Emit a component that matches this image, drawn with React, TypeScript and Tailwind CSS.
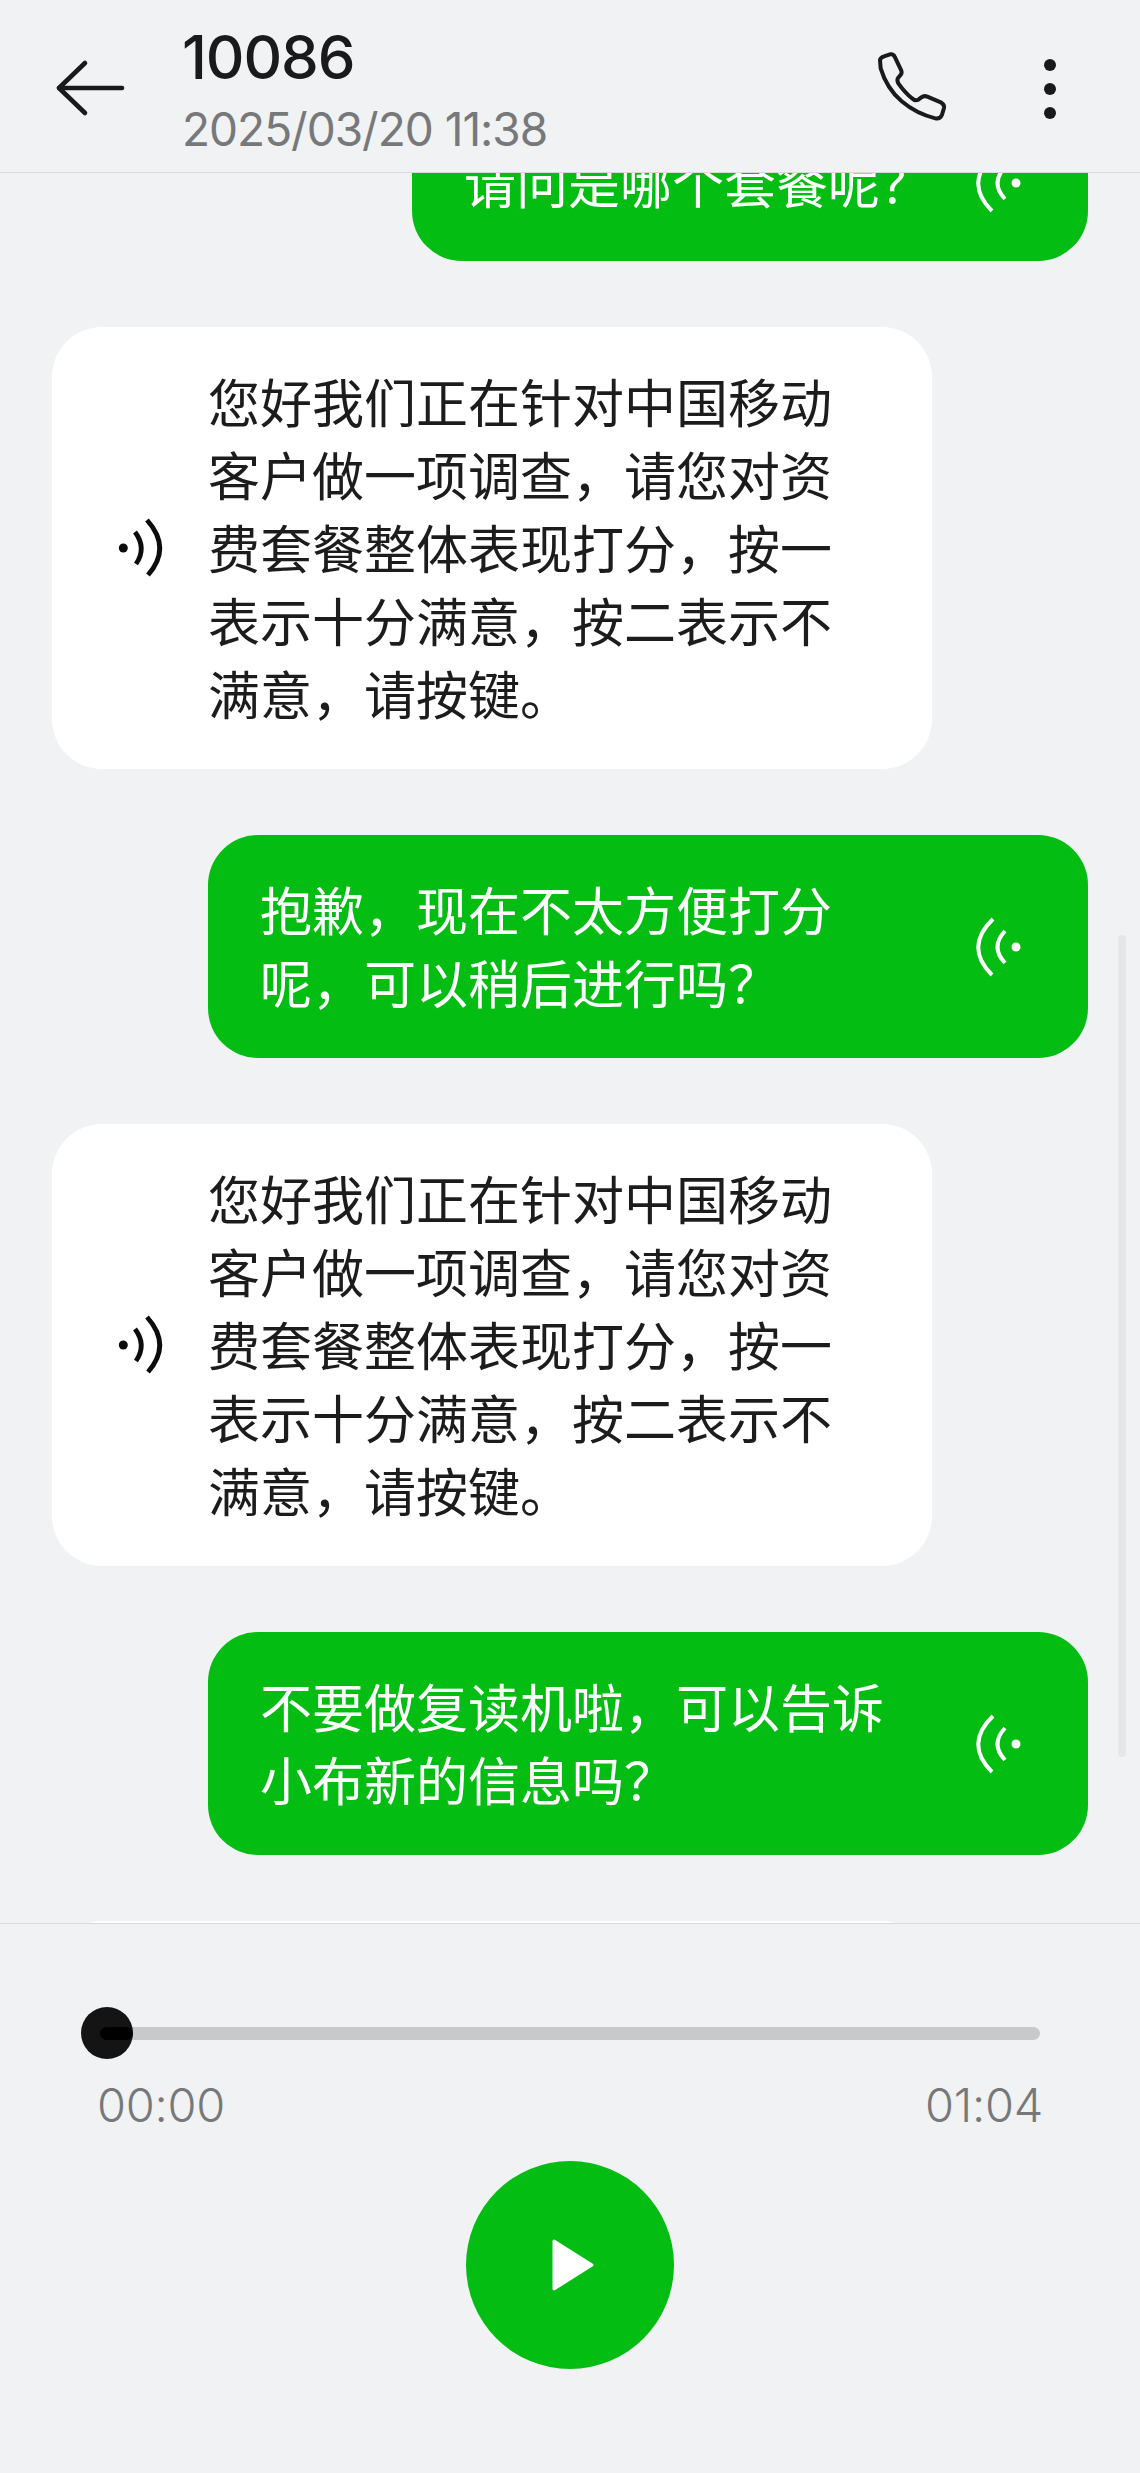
import React from 'react';

const cjk = 'font-["Noto_Sans_CJK_SC","Noto_Sans",sans-serif]';

const surveyLines = [
  '您好我们正在针对中国移动',
  '客户做一项调查，请您对资',
  '费套餐整体表现打分，按一',
  '表示十分满意，按二表示不',
  '满意，请按键。',
];

// white bubble speaker waves, opening to the right
const IncomingVoice: React.FC = () => (
  <svg viewBox="0 0 60 70" className="w-[60px] h-[70px] shrink-0 text-[#0c0c0c]" fill="none" stroke="currentColor" strokeWidth="4.8">
    <circle cx="11.3" cy="35" r="4.5" fill="currentColor" stroke="none" />
    <path d="M23 19 Q35 35 24 51" />
    <path d="M35 7 Q60 35 36 62" />
  </svg>
);

// green bubble waves, opening to the left
const OutgoingVoice: React.FC = () => (
  <svg viewBox="0 0 60 70" className="w-[60px] h-[70px] shrink-0 text-white" fill="none" stroke="currentColor" strokeWidth="4">
    <circle cx="51" cy="35" r="4.5" fill="currentColor" stroke="none" />
    <path d="M40 19 Q25 35 40 51" />
    <path d="M28 7 Q-1 35 27 63" />
  </svg>
);

const IncomingBubble: React.FC<{ lines?: string[] }> = ({ lines = [] }) => (
  <div className="ml-[52px] w-[880px] h-[442px] shrink-0 rounded-[50px] bg-white flex items-center pl-[60px] gap-[36px]">
    {lines.length > 0 && <IncomingVoice />}
    <div className="pb-[3px] text-[52px] leading-[73px] text-[#1c1c1c]">
      {lines.map((line) => (
        <div key={line} className="whitespace-nowrap">{line}</div>
      ))}
    </div>
  </div>
);

const OutgoingBubble: React.FC<{ lines: string[]; className: string }> = ({ lines, className }) => (
  <div className={`self-end mr-[52px] shrink-0 rounded-[50px] bg-[#03bd13] flex items-center justify-between pl-[52px] pr-[63px] ${className}`}>
    <div className="pb-[3px] text-[52px] leading-[73.5px] text-white">
      {lines.map((line) => (
        <div key={line} className="whitespace-nowrap">{line}</div>
      ))}
    </div>
    <OutgoingVoice />
  </div>
);

export default function App() {
  return (
    <div className={`relative w-[1140px] h-[2473px] overflow-hidden bg-[#f0f2f4] flex flex-col ${cjk}`}>
      <header className="h-[173px] shrink-0 border-b border-[#d8d9db] flex items-start">
        <svg viewBox="0 0 80 60" className="w-[80px] h-[60px] ml-[50px] mt-[58px] shrink-0 text-[#1a1a1c]" fill="none" stroke="currentColor" strokeWidth="4.6" strokeLinecap="round" strokeLinejoin="round">
          <path d="M9 30 H72" />
          <path d="M35 5 L9 30 L35 55" />
        </svg>
        <div className="ml-[52px] pt-[23px] font-['Inter',sans-serif]">
          <div className="text-[60px] leading-[68px] font-medium text-[#1a1a1c] tracking-[-1.1px]">10086</div>
          <div className="mt-[10px] text-[46px] leading-[56px] text-[#77787a] tracking-[-1px] whitespace-nowrap">2025/03/20 11:38</div>
        </div>
        <svg viewBox="45 60 228 228" className="ml-auto mt-[50px] w-[76px] h-[76px] shrink-0 text-[#1a1a1c]" fill="none" stroke="currentColor" strokeWidth="12" strokeLinejoin="round">
          <path d="M60 90 Q62 82 72 79 L90 73 Q100 71 104 80 L124 122 Q127 130 120 137 L114 144 Q110 150 115 160 Q135 188 155 204 Q165 214 175 209 L184 202 Q192 196 202 200 L244 218 Q254 224 252 234 L246 254 Q240 268 226 265 Q170 252 125 214 Q80 175 62 115 Z" />
        </svg>
        <div className="ml-[93px] mr-[84px] mt-[59px] flex flex-col gap-[12px] shrink-0">
          <div className="w-[12px] h-[12px] rounded-full bg-[#1a1a1c]" />
          <div className="w-[12px] h-[12px] rounded-full bg-[#1a1a1c]" />
          <div className="w-[12px] h-[12px] rounded-full bg-[#1a1a1c]" />
        </div>
      </header>

      <main className="relative flex-1 min-h-0 overflow-hidden">
        <div className="flex flex-col gap-[66px] mt-[-68px]">
          <OutgoingBubble lines={['请问是哪个套餐呢？']} className="w-[676px] h-[156px]" />
          <IncomingBubble lines={surveyLines} />
          <OutgoingBubble lines={['抱歉，现在不太方便打分', '呢，可以稍后进行吗？']} className="w-[880px] h-[223px]" />
          <IncomingBubble lines={surveyLines} />
          <OutgoingBubble lines={['不要做复读机啦，可以告诉', '小布新的信息吗？']} className="w-[880px] h-[223px]" />
          <IncomingBubble />
        </div>
        {/* overlay scrollbar */}
        <div className="absolute left-[1118px] top-[762px] w-[8px] h-[822px] rounded-full bg-[#e5e6e8]" />
      </main>

      <footer className="h-[550px] shrink-0 border-t border-[#d8d9db] flex flex-col px-[100px] pt-[103px]">
        <div className="relative h-[13px] rounded-full bg-[#c8c9cb]">
          <div className="absolute left-[-19px] top-[-20px] w-[52px] h-[52px] rounded-full bg-[#141414]" />
          <div className="absolute left-0 top-0 w-[33px] h-[13px] rounded-full bg-black" />
        </div>
        <div className="mt-[37px] mx-[-3px] flex justify-between font-['Inter',sans-serif] font-light text-[47px] leading-[56px] text-[#77787a] tracking-[-0.3px]">
          <span>00:00</span>
          <span>01:04</span>
        </div>
        <div className="mt-[28px] self-center w-[208px] h-[208px] rounded-full bg-[#03bd13] flex items-center justify-center">
          <svg viewBox="0 0 42 52" className="w-[42px] h-[52px] ml-[5px] text-white" fill="currentColor" stroke="currentColor" strokeWidth="3" strokeLinejoin="round">
            <path d="M2 2 L40 26 L2 50 Z" />
          </svg>
        </div>
      </footer>
    </div>
  );
}
